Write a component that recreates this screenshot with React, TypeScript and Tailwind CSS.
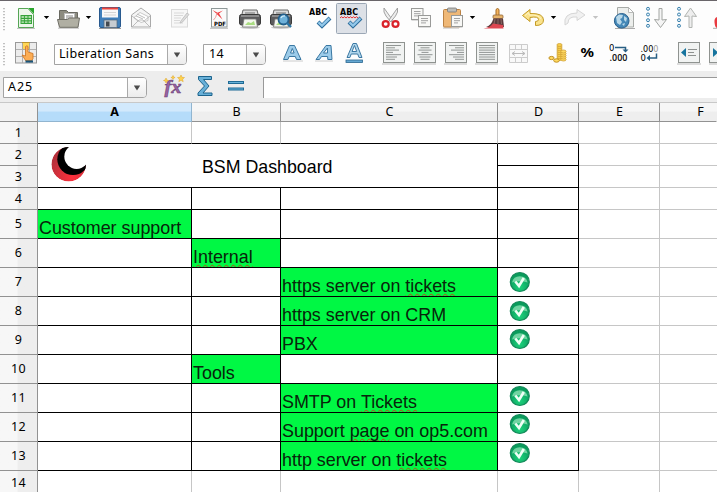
import React from "react";

type CellProps = { x: number; w: number; y?: number; h?: number; children?: React.ReactNode };

/* A toolbar slot. Drawings inside use window coordinates. */
function Slot({ x, w, y = 1, h = 35, children }: CellProps) {
  return (
    <svg className="block shrink-0" width={w} height={h} viewBox={`${x} ${y} ${w} ${h}`}>
      {children}
    </svg>
  );
}

const Caret = ({ x, y = 16, c = "#000" }: { x: number; y?: number; c?: string }) => (
  <path d={`M${x - 2.7} ${y}h5.4l-2.7 3z`} fill={c} />
);

const Handle = ({ y }: { y: number }) => (
  <path d={`M4 ${y}v23`} stroke="#999" strokeWidth="1.2" strokeDasharray="1.2 1.8" />
);

function Printer({ x }: { x: number }) {
  return (
    <g>
      <ellipse cx={x + 11} cy="27.5" rx="10" ry="1.5" fill="#ccc" />
      <path d={`M${x + 4} 10h14l1.5 6h-17z`} fill="#dcdcdc" stroke="#666" />
      <path d={`M${x + 6} 13h10`} stroke="#888" strokeWidth="1.3" />
      <rect x={x + 0.5} y="14.5" width="21" height="10.5" rx="2" fill="#5b5b5d" stroke="#3a3a3a" />
      <path d={`M${x + 2} 16h18`} stroke="#bbb" />
      <path d={`M${x + 5} 19h12l1.5 8h-15z`} fill="#f4f7ee" stroke="#777" strokeWidth=".8" />
      <path d={`M${x + 6} 25l3-3 3 1 3-2 1 4z`} fill="#a9dc82" />
    </g>
  );
}

function Abc({ x, wavy }: { x: number; wavy?: boolean }) {
  return (
    <g>
      <text x={x} y="15.4" fontFamily="DejaVu Sans" fontWeight="bold" fontSize="8.3" textLength="18" lengthAdjust="spacingAndGlyphs">ABC</text>
      {wavy && <path d={`M${x} 18l1.5-1.3 1.5 1.3 1.5-1.3 1.5 1.3 1.5-1.3 1.5 1.3 1.5-1.3 1.5 1.3 1.5-1.3 1.5 1.3 1.5-1.3 1.5 1.3`} fill="none" stroke="#ee3030" />}
      <path d={`M${x + 9} 22l4 4 8-8`} fill="none" stroke="#2a6c9c" strokeWidth="4" />
      <path d={`M${x + 9.5} 22.4l3.5 3.2 7.4-7.2`} fill="none" stroke="#93c8ea" strokeWidth="2.3" />
    </g>
  );
}

function Page({ x, y, w, h }: { x: number; y: number; w: number; h: number }) {
  return (
    <g>
      <path d={`M${x} ${y + h + 0.7}h${w}`} stroke="#ccc" />
      <rect x={x} y={y} width={w} height={h} fill="#f8f8f6" stroke="#999a98" />
      {[3, 5.2, 7.4].map((d, i) => (
        <path key={d} d={`M${x + 2.5} ${y + d}h${w - (i === 2 ? 7 : 5)}`} stroke="#999" strokeWidth=".9" />
      ))}
    </g>
  );
}

function AlignBox({ x, kind }: { x: number; kind: "l" | "c" | "r" | "j" }) {
  const widths = [15, 9, 13, 7, 15, 11, 9];
  return (
    <g>
      <path d={`M${x - 1} 64h23`} stroke="#bbb" />
      <rect x={x + 0.5} y="42.5" width="21" height="20" fill="#f1f3f2" stroke="#8f9390" />
      {widths.map((w0, i) => {
        const w = kind === "j" ? 16 : w0;
        const s = kind === "c" ? x + 11 - w / 2 : kind === "r" ? x + 19 - w : x + 3;
        return <path key={i} d={`M${s} ${45.5 + i * 2.3}h${w}`} stroke="#868a88" strokeWidth=".9" />;
      })}
    </g>
  );
}

function Row1() {
  return (
    <div className="flex h-[35px] overflow-hidden bg-[#fdfdfd]">
      <Slot x={0} w={12}><Handle y={8} /></Slot>
      <Slot x={12} w={24}>
        <path d="M17 28.4h18" stroke="#bbb" />
        <path d="M18.5 8.5h9.5l5.5 6v13h-15z" fill="#edf6ec" stroke="#55a555" />
        <path d="M28 8h6v6z" fill="#2aa52d" />
        <rect x="20.5" y="15" width="11.5" height="9" fill="#35a239" />
        <path d="M21.5 17h2.4m1 0h2.6m1 0h2.6M21.5 19.6h2.4m1 0h2.6m1 0h2.6M21.5 22.2h2.4m1 0h2.6m1 0h2.6" stroke="#cdf0c9" strokeWidth="1.3" />
      </Slot>
      <Slot x={36} w={16}><Caret x={46.5} /></Slot>
      <Slot x={52} w={30}>
        <path d="M58 28.2h21" stroke="#bbb" />
        <path d="M59.5 26V10.5h7l2 2h9V26z" fill="#8c8b80" stroke="#686860" />
        <rect x="64.5" y="13.5" width="10" height="8" fill="#fff" stroke="#bbb" />
        <path d="M66 16h7M66 18h7" stroke="#777" strokeWidth=".9" />
        <path d="M57.5 19.5h10l2-1.5h10l-1.5 9.3h-18.5z" fill="#b0afa3" stroke="#6e6d65" />
      </Slot>
      <Slot x={82} w={13}><Caret x={88.5} /></Slot>
      <Slot x={95} w={30}>
        <path d="M99 28.5h22" stroke="#999" />
        <rect x="99.5" y="7.5" width="21" height="20" rx="1.5" fill="#3f7fbb" stroke="#28598e" />
        <rect x="102" y="8" width="16" height="9.5" fill="#f8f8f8" />
        <path d="M102 8.5h16" stroke="#ee453d" strokeWidth="2" />
        <path d="M104 12.5h12M104 15h12" stroke="#ccc" strokeWidth=".8" />
        <rect x="104" y="20" width="13" height="7.5" fill="#c7ccd1" stroke="#55677a" strokeWidth=".7" />
        <rect x="106" y="21.5" width="3.5" height="5" fill="#454a50" />
      </Slot>
      <Slot x={125} w={30}>
        <path d="M131.5 15l9.5-7 9.5 7v12h-19z" fill="#f5f5f5" stroke="#aaa" />
        <path d="M134 17.5l6-5 8 4v4l-7 2z" fill="#fff" stroke="#bbb" strokeWidth=".8" />
        <path d="M131.5 15.5l7 6m12-6l-7 6M132 27l7-7h4l7 7M136 16l7 3m-6-5l8 4" fill="none" stroke="#b5b5b5" strokeWidth=".9" />
        <path d="M131 28.3h20" stroke="#ddd" />
      </Slot>
      <Slot x={155} w={45}>
        <rect x="171.5" y="9.5" width="16" height="17.5" fill="#f7f7f7" stroke="#dadada" />
        <path d="M174 13h10M174 15.5h9M174 18h7M174 20.5h6M174 23h9" stroke="#d5d5d5" strokeWidth=".9" />
        <path d="M180.5 21.5l6.5-8.5 2 1.5-6.5 7.5-2.5 1z" fill="#ddd" stroke="#bbb" strokeWidth=".8" />
      </Slot>
      <Slot x={200} w={35}>
        <path d="M210 28.3h18" stroke="#bbb" />
        <rect x="211.5" y="8.5" width="15.5" height="18.5" fill="#fafafa" stroke="#8e9898" />
        <path d="M212.5 10l10 9.5-3.5-6 4-3-5.5 2.3z" fill="#ef3d40" />
        <path d="M217 13q-1 5-3.5 7" fill="none" stroke="#f0a0a0" />
        <text x="214" y="26" fontSize="5.8" fontWeight="bold" fontFamily="DejaVu Sans" textLength="12" lengthAdjust="spacingAndGlyphs">PDF</text>
      </Slot>
      <Slot x={235} w={31}><Printer x={239} /></Slot>
      <Slot x={266} w={34}>
        <Printer x={270} />
        <circle cx="283.5" cy="19.5" r="5" fill="#6eb1d9" stroke="#225f8d" strokeWidth="1.8" />
        <path d="M281 18q1-2.5 4-2" fill="none" stroke="#cbe9f8" strokeWidth="1.3" />
        <path d="M287 23l4 4" stroke="#2b76a5" strokeWidth="2.4" />
      </Slot>
      <Slot x={300} w={36}><Abc x={309} /></Slot>
      <Slot x={336} w={32}>
        <rect x="336.5" y="3.5" width="30" height="30" rx="1" fill="#dde1e7" stroke="#9ba7b5" />
        <Abc x={340} wavy />
      </Slot>
      <Slot x={368} w={40}>
        <path d="M384 8q-1 4 2 8l5 6 1.5-2z" fill="#eee" stroke="#999" strokeWidth=".9" />
        <path d="M397.5 8q1 4-2 8l-5 6-1.5-2z" fill="#eee" stroke="#999" strokeWidth=".9" />
        <ellipse cx="385.7" cy="24" rx="3" ry="2.8" fill="#fff" stroke="#d9232b" strokeWidth="2.2" />
        <ellipse cx="395.5" cy="24" rx="3" ry="2.8" fill="#fff" stroke="#d9232b" strokeWidth="2.2" />
      </Slot>
      <Slot x={408} w={32}>
        <Page x={411.5} y={8.5} w={11.5} h={11} />
        <Page x={418.5} y={15.5} w={12} h={11} />
      </Slot>
      <Slot x={440} w={28}>
        <path d="M443 28h16" stroke="#bbb" />
        <rect x="443.5" y="9.5" width="17" height="17.5" rx="1" fill="#efb877" stroke="#bb8244" />
        <rect x="447.5" y="8" width="9" height="4" rx="1" fill="#bcbcb8" stroke="#777" strokeWidth=".8" />
        <Page x={451.5} y={15.5} w={11} h={11} />
      </Slot>
      <Slot x={468} w={12}><Caret x={472.5} /></Slot>
      <Slot x={480} w={35}>
        <path d="M496 16V9.5q1.5-2 3 0V16" fill="#f4b45e" stroke="#a46a25" />
        <rect x="493" y="15" width="10" height="3.5" rx="1" fill="#e8b46a" stroke="#93683a" strokeWidth=".8" />
        <path d="M493.5 18.5h9.5l1 8.5H486q5-1 7.5-8.5z" fill="#5b3a3c" />
        <path d="M483.5 28.5q7-1 9.5-5l10 1.5.5 3.5z" fill="#dd4651" />
        <path d="M495 19l-1 5m4-5v5m3-5l.5 5" stroke="#997b74" strokeWidth=".7" />
      </Slot>
      <Slot x={515} w={33}>
        <path d="M530 9.5l-7.5 6 7.5 6v-4q8.5-1.5 8.5 2 0 2-3 2v4q8 0 8-5.5 0-7-13.5-6.5z" fill="#fae28b" stroke="#c49b25" strokeWidth="1" strokeLinejoin="round" />
        <path d="M525 15.5l4-3v2.5q10-.5 12 4" fill="none" stroke="#fff4bf" />
      </Slot>
      <Slot x={548} w={12}><Caret x={553.5} /></Slot>
      <Slot x={560} w={30}>
        <path d="M577 9.5l8 5.5-8 5.5v-3.5q-9-1-9 6l-3 2q-2-12 12-12z" fill="#f1f1f1" stroke="#d6d6d6" strokeLinejoin="round" />
      </Slot>
      <Slot x={590} w={18}><Caret x={595.5} c="#c3c3c3" /></Slot>
      <Slot x={608} w={32}>
        <path d="M617.5 7.5h11l5 5v14.5h-16z" fill="#eceeec" stroke="#a7aaa7" />
        <path d="M628.5 7.5v5h5z" fill="#fff" stroke="#aaa" strokeWidth=".8" />
        <path d="M615 28.5h20" stroke="#aaa" />
        <circle cx="621.7" cy="20.8" r="7.3" fill="#4588b7" stroke="#285f8d" />
        <path d="M616 17l3-2.5 4 .5-1 3-2 1 2 3-2 3-3-2zM624 16l3 2-1 4-2-2zM622 24l3-1-1 3z" fill="#b9d8e9" />
      </Slot>
      <Slot x={640} w={32}>
        {[8.8, 14.5, 20.2, 25.8].map((y) => <circle key={y} cx="648" cy={y} r="1.5" fill="#e4f3fc" stroke="#3d83ae" />)}
        <path d="M659 8.5h3V20l4.5-.5-6 8-6-8 4.5.5z" fill="#f5f5f5" stroke="#a2a5a2" strokeLinejoin="round" />
      </Slot>
      <Slot x={672} w={34}>
        {[8.8, 14.5, 20.2, 25.8].map((y) => <circle key={y} cx="679" cy={y} r="1.5" fill="#e4f3fc" stroke="#3d83ae" />)}
        <path d="M689 27.5V16l-4.5.5 6-8.5 6 8.5-4.5-.5v11.5z" fill="#eee" stroke="#b1b4b1" strokeLinejoin="round" />
      </Slot>
      <Slot x={706} w={11}>
        <path d="M717 17q-3 1-2.5 5.5.5 5 2.5 5.5z" fill="#e83a40" />
        <path d="M713 28.3h4" stroke="#aaa" />
      </Slot>
    </div>
  );
}

function Combo({ text, box, pad }: { text: string; box: string; pad: string }) {
  return (
    <div className={`flex h-[21px] shrink-0 overflow-hidden rounded-r-[4px] border border-[#a3a3a3] bg-white ${box}`}>
      <span className={`flex-1 whitespace-nowrap font-['Noto_Sans'] text-[12.5px] leading-[18px] text-black ${pad}`}>{text}</span>
      <span className="flex w-[19px] items-center justify-center border-l border-[#aaa] bg-gradient-to-b from-white to-[#ececec]">
        <svg width="8" height="6" viewBox="0 0 8 6"><path d="M.8.5h6.4L4 5.5z" fill="#4b4b4b" /></svg>
      </span>
    </div>
  );
}

function Row2() {
  const p = { y: 36, h: 35 };
  return (
    <div className="flex h-[35px] overflow-hidden bg-[#fdfdfd]">
      <Slot x={0} w={12} {...p}><Handle y={43} /></Slot>
      <Slot x={12} w={42} {...p}>
        <rect x="15.5" y="42.5" width="21" height="20.5" fill="#ececec" stroke="#999" />
        <rect x="22.5" y="42.5" width="7" height="7" fill="#ffd755" stroke="#b9932d" />
        <path d="M16 49.5h20M16 56.5h20M22.5 43v20M29.5 43v20" stroke="#aaa" strokeWidth=".9" />
        <path d="M25.5 46.5q1.5-1.5 2.5 0V52l5 1.5v5l-1.5 2.5h-5.5l-4-6 3.5 1z" fill="#fcad54" stroke="#cf7b2b" strokeWidth=".9" />
        <path d="M25.5 61.5h7.5" stroke="#1b557a" strokeWidth="2.2" />
      </Slot>
      <Combo text="Liberation Sans" box="mt-2 w-[133px]" pad="pl-[4px] tracking-[0.32px]" />
      <Slot x={187} w={16} {...p} />
      <Combo text="14" box="mt-2 w-[63px]" pad="pl-[5px] tracking-[0.3px]" />
      <Slot x={266} w={114} {...p}>
        <g strokeLinejoin="round" fillRule="evenodd" stroke="#3a78a3">
          <path d="M283.5 59.5l6-14h5l6.5 14h-4.5l-1.2-3h-6.2l-1.2 3zM290.5 53h3.6l-1.8-4.5z" fill="#9ccbe9" />
          <path d="M316 59.5l10-14h5l1 14h-4.2l-.2-3h-6.1l-2 3zM323.5 53h4v-5z" fill="#9ccbe9" />
          <path d="M347 57.5l6-14h3.5l5.5 14h-3l-1.3-3.5h-6.5l-1.3 3.5zM352 51.5h4.7l-2.2-6z" fill="#b0d5eb" />
        </g>
        <path d="M283 61h20M315 61h18" stroke="#ccc" />
        <rect x="346" y="60" width="16.5" height="2.5" fill="#66a9d3" stroke="#28658f" strokeWidth=".8" />
      </Slot>
      <Slot x={380} w={31} {...p}><AlignBox x={383} kind="l" /></Slot>
      <Slot x={411} w={31} {...p}><AlignBox x={414} kind="c" /></Slot>
      <Slot x={442} w={31} {...p}><AlignBox x={445} kind="r" /></Slot>
      <Slot x={473} w={31} {...p}><AlignBox x={476} kind="j" /></Slot>
      <Slot x={504} w={38} {...p}>
        <path d="M509.5 44.5h18v18h-18zM509.5 49.5h18M509.5 57.5h18M515.5 44.5v5m6-5v5m-6 8v5m6-5v5" fill="#f9f9f9" stroke="#ccc" />
        <path d="M512 53.5h13m-10-2l-3 2 3 2m7-4l3 2-3 2" fill="none" stroke="#bbb" />
      </Slot>
      <Slot x={542} w={34} {...p}>
        {[59, 57, 55, 53, 51, 49, 47, 45].map((y) => <ellipse key={y} cx="559.5" cy={y} rx="2.6" ry="1.5" fill="#f8cf4c" stroke="#cfa035" strokeWidth=".8" />)}
        {[59.5, 57.5, 55.5, 53.5, 51.5].map((y) => <ellipse key={y} cx="563.5" cy={y} rx="2.6" ry="1.5" fill="#ffda62" stroke="#cfa035" strokeWidth=".8" />)}
        <ellipse cx="551.5" cy="58" rx="2.6" ry="1.6" fill="#ffda62" stroke="#c18f1d" />
        <ellipse cx="556.5" cy="60.5" rx="2.8" ry="1.7" fill="#ffda62" stroke="#c18f1d" />
      </Slot>
      <Slot x={576} w={29} {...p}>
        <text x="580.5" y="57" fontSize="12.5" fontWeight="bold" fontFamily="Noto Sans" textLength="13.5" lengthAdjust="spacingAndGlyphs">%</text>
      </Slot>
      <Slot x={605} w={32} {...p}>
        <text x="609" y="50.5" fontSize="8.5" fontFamily="DejaVu Sans">0</text>
        <path d="M615 47.5h10.5v3" fill="none" stroke="#285f84" strokeWidth="1.5" />
        <path d="M622.5 49.5h6l-3 3z" fill="#285f84" />
        <text x="609.5" y="61" fontSize="9" fontFamily="DejaVu Sans" stroke="#000" strokeWidth=".2" textLength="18" lengthAdjust="spacingAndGlyphs">.000</text>
      </Slot>
      <Slot x={637} w={37} {...p}>
        <text x="640.5" y="51.8" fontSize="9" fontFamily="DejaVu Sans" textLength="18" lengthAdjust="spacingAndGlyphs">.00<tspan fill="#999">0</tspan></text>
        <text x="640.5" y="61" fontSize="8.5" fontFamily="DejaVu Sans">0</text>
        <path d="M656.5 53.5v4.5h-7" fill="none" stroke="#285f84" strokeWidth="1.5" />
        <path d="M650 55v6l-3.5-3z" fill="#285f84" />
      </Slot>
      <Slot x={674} w={30} {...p}>
        <path d="M677 64h24" stroke="#bbb" />
        <rect x="678.5" y="42.5" width="21" height="20" fill="#f1f3f2" stroke="#8f9390" />
        <path d="M686 48v9l-5-4.5z" fill="#16749e" />
        <path d="M688 49.5h9m-9 3h6m-6 3h8" stroke="#8d918f" />
      </Slot>
      <Slot x={704} w={13} {...p}>
        <path d="M709 64h8" stroke="#bbb" />
        <rect x="709.5" y="42.5" width="20" height="20" fill="#f1f3f2" stroke="#8f9390" />
        <path d="M713 48v9l5-4.5z" fill="#16749e" />
      </Slot>
    </div>
  );
}

function FormulaBar() {
  return (
    <div className="flex h-[31px] bg-[#ededed] pl-[3px]">
      <Combo text="A25" box="mt-[6px] w-[144px]" pad="pl-[4px] tracking-[0.9px]" />
      <Slot x={147} w={116} y={71} h={31}>
        <text x="164.5" y="93" fontSize="18" fontFamily="Liberation Serif" fontStyle="italic" fontWeight="bold" fill="#9a62a2" stroke="#653d71" strokeWidth=".5" textLength="17" lengthAdjust="spacingAndGlyphs">fx</text>
        <path d="M166 78l.7 1.8 1.8.7-1.8.7-.7 1.8-.7-1.8-1.8-.7 1.8-.7zM173 75.5l.6 1.5 1.5.5-1.5.6-.6 1.5-.6-1.5-1.5-.6 1.5-.5zM181 75l1 2.3 2.5.2-1.9 1.7.6 2.5-2.2-1.4-2.2 1.4.6-2.5-1.9-1.7 2.5-.2z" fill="#ffd24e" stroke="#dda321" strokeWidth=".5" />
        <path d="M198.5 76.5h13v3h-8l5.5 6.5-6 7h9v2.5h-14v-2.5l6.5-7-6-6.5z" fill="#68b0d8" stroke="#1d648d" strokeWidth="1" />
        <rect x="228.5" y="81.5" width="15" height="2" fill="#67b1d8" stroke="#1f6b96" />
        <rect x="228.5" y="88" width="15" height="2" fill="#67b1d8" stroke="#1f6b96" />
      </Slot>
      <div className="mt-[6px] h-[21px] flex-1 border-l border-t border-[#999] bg-white" />
    </div>
  );
}

function Check() {
  return (
    <svg className="block" width="22" height="22" viewBox="0 0 22 22">
      <defs>
        <radialGradient id="orb" cx=".5" cy=".75" r=".6"><stop offset="0" stopColor="#1cd27c" /><stop offset="1" stopColor="#0a9c5c" /></radialGradient>
      </defs>
      <circle cx="10.8" cy="11" r="9.5" fill="url(#orb)" stroke="#15895a" strokeWidth="1.2" />
      <path d="M3 11.5a8 8 0 0 1 15.600 0q-8-2.500-15.600 0z" fill="#8adfb2" opacity=".8" />
      <path d="M6.300 10.500l3.700 4.500 4.800-8" fill="none" stroke="#effff6" strokeWidth="2.600" />
    </svg>
  );
}

function Typo({ children }: { children: string }) {
  return <span className="underline decoration-[#b0521c] decoration-wavy decoration-[1px] underline-offset-[1px] [text-decoration-skip-ink:none]">{children}</span>;
}

const B = "border-black";
const G = "border-[#c6c6c6]";

function Cell({ green, children, last }: { green?: boolean; children?: React.ReactNode; last?: boolean }) {
  return (
    <div className={`overflow-hidden border-b border-r pl-[1px] ${last ? G : B} ${green ? "bg-[#00f844]" : "bg-white"}`}>
      {children && <div className="mt-[7px] whitespace-nowrap font-['Liberation_Sans'] text-[17.9px] leading-[22px] text-[#08240b]">{children}</div>}
    </div>
  );
}

type Row = { n: number; a?: React.ReactNode; b?: React.ReactNode; c?: React.ReactNode; check?: string };
const rows: Row[] = [
  { n: 5, a: "Customer support" },
  { n: 6, b: <Typo>Internal</Typo> },
  { n: 7, c: <>https server on <Typo>tickets</Typo></>, check: "pt-[3px]" },
  { n: 8, c: "https server on CRM", check: "pt-[3px]" },
  { n: 9, c: "PBX", check: "pt-[2px]" },
  { n: 10, b: "Tools" },
  { n: 11, c: <>SMTP on <Typo>Tickets</Typo></>, check: "pt-[1px]" },
  { n: 12, c: <>Support <Typo>page</Typo> on op5.com</>, check: "pt-0" },
  { n: 13, c: <>http server on <Typo>tickets</Typo></>, check: "pt-0" },
];

function RowHead({ n, last }: { n: number; last?: boolean }) {
  return (
    <div className={`flex items-center justify-center border-r border-[#929292] bg-gradient-to-r from-[#f7f7f7] from-45% to-[#eeeeee] to-50% font-['Noto_Sans'] text-[12.5px] leading-none text-black ${last ? "pt-[3px]" : "border-b pt-px"}`}>
      <span className="tracking-[0.3px]">{n}</span>
    </div>
  );
}

const COLS = "grid grid-cols-[38px_154px_89px_217px_81px_81px_57px]";

function Sheet() {
  return (
    <div className="flex flex-col">
      <div className={`${COLS} h-5 border-t border-[#c8c8c8]`}>
        <div className="border-b border-r border-[#929292] bg-[#f2f2f2]" />
        {["A", "B", "C", "D", "E", "F"].map((l) => (
          <div key={l} className={`flex items-center justify-center border-b border-r pt-px font-['Noto_Sans'] text-[12.5px] leading-none text-black ${l === "A" ? "border-[#91b5d0] bg-gradient-to-b from-[#d2e9fc] from-45% to-[#b5dcfa] to-50% font-bold" : l === "F" ? "border-b-[#929292] border-r-transparent bg-gradient-to-b from-[#f6f6f6] from-45% to-[#eeeeee] to-50% pl-[25px]" : "border-[#929292] bg-gradient-to-b from-[#f6f6f6] from-45% to-[#eeeeee] to-50% pl-px"}`}>{l}</div>
        ))}
      </div>
      <div className={`${COLS} h-[22px]`}>
        <RowHead n={1} />
        {[0, 1, 2, 3, 4].map((i) => <div key={i} className={`border-b border-r border-r-[#c6c6c6] ${i < 4 ? "border-b-black" : "border-b-[#c6c6c6]"}`} />)}
        <div className={`border-b ${G}`} />
      </div>
      <div className={`${COLS} h-11 grid-rows-2`}>
        <RowHead n={2} />
        <div className="col-span-3 row-span-2 flex items-center border-b border-r border-black pl-[13px]">
          <svg className="block shrink-0" width="36" height="43" viewBox="51 144 36 43">
            <defs>
              <radialGradient id="moon" cx=".6" cy=".85" r=".7"><stop offset="0" stopColor="#ff303c" /><stop offset="1" stopColor="#b7303b" /></radialGradient>
              <clipPath id="disc"><circle cx="68.7" cy="164.3" r="17.3" /></clipPath>
            </defs>
            <g clipPath="url(#disc)">
              <circle cx="68.7" cy="164.3" r="17.3" fill="url(#moon)" />
              <circle cx="73" cy="159.3" r="15.7" fill="#000" />
            </g>
            <circle cx="76.6" cy="156.6" r="12.3" fill="#fff" />
            <path d="M72 144h18v18l-5-2-12-12z" fill="#fff" />
          </svg>
          <span className="ml-[115px] pt-[5px] font-['Liberation_Sans'] text-[17.8px] leading-none text-black">BSM Dashboard</span>
        </div>
        <Cell />
        <Cell last />
        <div className={`border-b ${G}`} />
        <RowHead n={3} />
        <Cell />
        <Cell last />
        <div className={`border-b ${G}`} />
      </div>
      <div className={`${COLS} h-[22px]`}>
        <RowHead n={4} /><Cell /><Cell /><Cell /><Cell /><Cell last />
        <div className={`border-b ${G}`} />
      </div>
      {rows.map((r) => (
        <div key={r.n} className={`${COLS} h-[29px]`}>
          <RowHead n={r.n} />
          <Cell green={!!r.a}>{r.a}</Cell>
          <Cell green={!!r.b}>{r.b}</Cell>
          <Cell green={!!r.c}>{r.c}</Cell>
          <div className={`overflow-hidden border-b border-r border-black pl-[11px] ${r.check ?? ""}`}>{r.check && <Check />}</div>
          <Cell last />
          <div className={`border-b ${G}`} />
        </div>
      ))}
      <div className={`${COLS} h-[21px]`}>
        <RowHead n={14} last />
        {[0, 1, 2, 3, 4].map((i) => <div key={i} className={`border-r ${G}`} />)}
        <div />
      </div>
    </div>
  );
}

export default function App() {
  return (
    <div className="h-[492px] w-[717px] overflow-hidden bg-white">
      <div className="h-px bg-[#69656a]" />
      <Row1 />
      <Row2 />
      <FormulaBar />
      <Sheet />
    </div>
  );
}
